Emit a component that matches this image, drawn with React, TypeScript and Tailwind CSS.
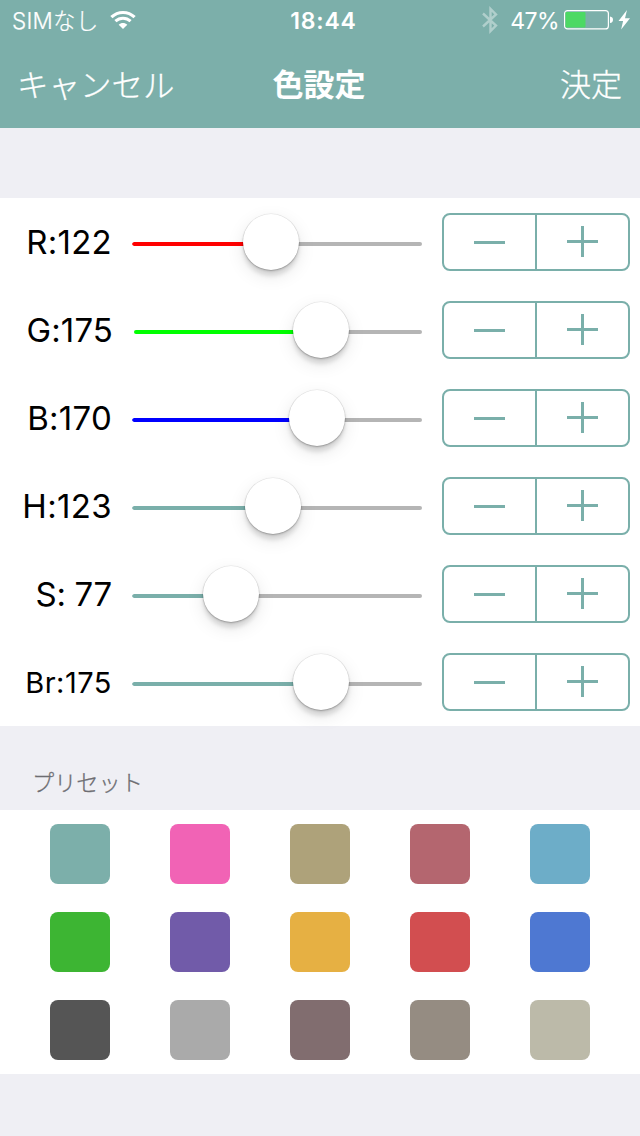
const channels = [
  { label: 'R:122', color: '#ff0000', start: 132, thumb: 271, text: 'text-[33px] tracking-[0.25px]' },
  { label: 'G:175', color: '#00ff00', start: 134, thumb: 321, text: 'text-[33px] tracking-[0.1px] -mr-px' },
  { label: 'B:170', color: '#0000ff', start: 132, thumb: 317, text: 'text-[33px] tracking-[0.25px]' },
  { label: 'H:123', color: '#7aafaa', start: 132, thumb: 273, text: 'text-[33px] tracking-[0.35px]' },
  { label: 'S: 77', color: '#7aafaa', start: 132, thumb: 231, text: 'text-[33px] tracking-[-0.3px]' },
  { label: 'Br:175', color: '#7aafaa', start: 132, thumb: 321, text: 'text-[29px] tracking-[0.5px]' },
];

const presets = [
  'bg-[#7cafaa]', 'bg-[#f163b5]', 'bg-[#aea27a]', 'bg-[#b4666f]', 'bg-[#6dadc8]',
  'bg-[#3db533]', 'bg-[#715ba9]', 'bg-[#e6b043]', 'bg-[#d24e50]', 'bg-[#4e78d2]',
  'bg-[#555555]', 'bg-[#aaaaaa]', 'bg-[#816d6f]', 'bg-[#958c82]', 'bg-[#bcbaa9]',
];

function StatusBar() {
  return (
    <div className="relative flex h-10 items-center justify-between pr-2 pl-3">
      <div className="flex items-center">
        <span className="pt-0.5 text-[22.5px] font-light tracking-[0.2px] [-webkit-text-stroke:0.2px_white]">SIMなし</span>
        <svg className="ml-3 block" width="26" height="20" viewBox="0 0 26 20" fill="none">
          <path d="M1.4 7.2C8 .9 18 .9 24.6 7.2" stroke="white" strokeWidth="3.2" />
          <path d="M5.4 11.2c4.4-4 10.800-4 15.200 0" stroke="white" strokeWidth="3" />
          <path d="M13 19l-4.300-4.300c2.400-2.200 6.200-2.200 8.600 0z" fill="white" />
        </svg>
      </div>
      <span className="absolute inset-x-0 pt-0.5 pl-[7px] text-center text-[23px] font-semibold tracking-[0.8px]">18:44</span>
      <div className="flex items-center">
        <svg className="mr-[12px] block" width="16" height="28" viewBox="0 0 16 28" fill="none" stroke="white" strokeOpacity="0.4" strokeWidth="2.4">
          <path d="M1 7.500L14 19.500L8.500 25V3L14 8.500L1 20.500" />
        </svg>
        <span className="pt-0.5 text-[23px] tracking-[-0.6px]">47%</span>
        <svg className="ml-[5px] block" width="68" height="22" viewBox="0 0 68 22">
          <rect x="0.6" y="1.600" width="43.800" height="18.300" rx="3" fill="none" stroke="white" strokeWidth="1.200" />
          <rect x="1.500" y="3" width="20" height="15.500" rx="1" fill="#4cd964" />
          <path d="M46 7.500q3 .5 3 3.300t-3 3.300z" fill="white" />
          <path d="M63 1L54.500 12h4.600l-2 8.500L66 9.200h-5z" fill="white" />
        </svg>
      </div>
    </div>
  );
}

function Slider({ color, start, thumb }: { color: string; start: number; thumb: number }) {
  return (
    <div className="relative ml-5 flex h-[88px] w-[290px] items-center">
      <div className="mt-1 flex h-1 w-full overflow-hidden rounded-full">
        <div className="h-full rounded-l-full" style={{ marginLeft: start - 132, width: thumb - start, backgroundColor: color }} />
        <div className="h-full flex-1 bg-[#b5b5b5]" />
      </div>
      <div
        className="absolute top-[15.500px] size-[56.500px] rounded-full bg-white shadow-[0_0_0_0.5px_rgba(0,0,0,0.08),0_1px_2px_rgba(0,0,0,0.26),0_6px_4px_rgba(0,0,0,0.11),0_6px_18px_rgba(0,0,0,0.1)]"
        style={{ left: thumb - 132 - 28.25 }}
      />
    </div>
  );
}

function Stepper() {
  return (
    <div className="ml-5 flex h-[58px] w-[188px] overflow-hidden rounded-[8px] border-2 border-[#7aafaa]">
      <button className="flex w-[93px] items-start border-r-2 border-[#7aafaa] pt-[26px] pl-[30px]">
        <span className="block h-[3px] w-[31px] bg-[#7aafaa]" />
      </button>
      <button className="flex flex-1 items-start pt-[11px] pl-[30px]">
        <svg className="block" width="31" height="31" viewBox="0 0 31 31" fill="#7aafaa">
          <path d="M14 0h3v14h14v3H17v14h-3V17H0v-3h14z" />
        </svg>
      </button>
    </div>
  );
}

export default function App() {
  return (
    <div className="flex h-[1136px] w-[640px] flex-col overflow-hidden bg-[#efeff4] font-['Inter','Noto_Sans_CJK_JP',sans-serif] leading-none whitespace-nowrap text-black">
      <header className="h-32 bg-[#7cafaa] text-white">
        <StatusBar />
        <nav className="grid h-[88px] grid-cols-[1fr_auto_1fr] items-center pr-[18px] pb-1 pl-[17px] font-['Noto_Sans_CJK_JP',sans-serif]">
          <button className="pt-[3px] text-left text-[31.500px] font-light [-webkit-text-stroke:0.3px_white]">キャンセル</button>
          <h1 className="pr-px text-[31px] font-bold">色設定</h1>
          <button className="text-right text-[31px] font-light [-webkit-text-stroke:0.3px_white]">決定</button>
        </nav>
      </header>

      <section className="mt-[70px] bg-white">
        {channels.map((c) => (
          <div key={c.label} className="flex h-[88px] items-center">
            <div className="flex w-28 justify-end">
              <span className={c.text}>{c.label}</span>
            </div>
            <Slider color={c.color} start={c.start} thumb={c.thumb} />
            <Stepper />
          </div>
        ))}
      </section>

      <h2 className="flex h-[84px] items-end pb-[18px] pl-8 font-['Noto_Sans_CJK_JP',sans-serif] text-[22.200px] font-light text-[#6d6d72] [-webkit-text-stroke:0.3px_#6d6d72]">プリセット</h2>

      <section className="grid h-[264px] grid-cols-5 gap-x-[60px] gap-y-7 bg-white px-[50px] py-[14px]">
        {presets.map((bg) => (
          <button key={bg} className={`size-[60px] rounded-[8px] ${bg}`} />
        ))}
      </section>
    </div>
  );
}
